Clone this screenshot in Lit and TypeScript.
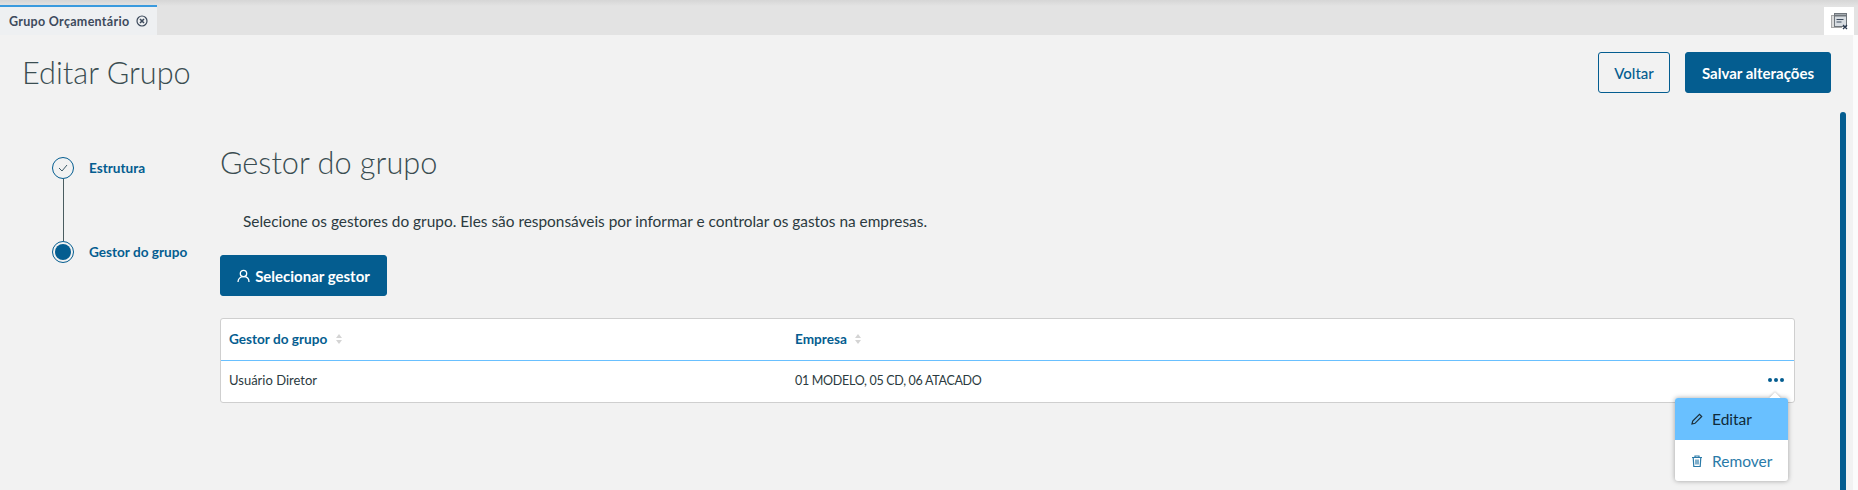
import { LitElement, html, css } from 'lit';
import { customElement } from 'lit/decorators.js';

const sortIcon = html`<svg class="sort" width="8" height="12" viewBox="0 0 8 12"><path d="M4 1 7 5H1Z" fill="#d4d4d4"/><path d="M4 11 1 7h6Z" fill="#d4d4d4"/></svg>`;

@customElement('app-root')
export class AppRoot extends LitElement {
    static styles = css`
        :host {
            display: block;
            position: relative;
            width: 1858px;
            height: 490px;
            overflow: hidden;
            background: #f2f2f2;
            font-family: "Lato", "Open Sans", sans-serif;
            color: #1c2f3a;
        }

        .tabbar {
            display: flex;
            justify-content: space-between;
            height: 35px;
            box-sizing: border-box;
            padding: 5px 4px 0 0;
            background: linear-gradient(#d6d6d6 0, #e3e3e3 6px, #e3e3e3 100%);
        }

        .tab {
            display: flex;
            align-items: center;
            gap: 7px;
            width: 157px;
            box-sizing: border-box;
            padding: 0 0 0 9px;
            border-top: 2px solid #3a9ade;
            background: #eef0f2;
            color: #3d4a5c;
            font-size: 12.5px;
            font-weight: 700;
            letter-spacing: 0.3px;
        }

        .corner {
            display: flex;
            align-items: center;
            justify-content: center;
            width: 30px;
            height: 28px;
            margin-top: 2px;
            background: #fff;
        }

        .page {
            padding: 0 27px 0 22px;
        }

        .top {
            display: flex;
            justify-content: space-between;
            align-items: flex-start;
            padding-top: 17px;
        }

        h1 {
            margin: 2px 0 0;
            color: #3a4d51;
            font-size: 30.7px;
            font-weight: 300;
            line-height: 38px;
        }

        .actions {
            display: flex;
            gap: 15px;
        }

        button {
            display: flex;
            align-items: center;
            justify-content: center;
            gap: 5px;
            height: 41px;
            box-sizing: border-box;
            border: 1px solid #045d90;
            border-radius: 3px;
            background: #045d90;
            color: #fff;
            font: 700 15px "Lato", sans-serif;
        }

        button.ghost {
            width: 72px;
            background: transparent;
            color: #045d90;
            font-weight: 500;
        }

        button.save {
            width: 146px;
        }

        button.pick {
            width: 167px;
        }

        .main {
            display: flex;
            margin-top: 52px;
        }

        .steps {
            width: 198px;
            flex: none;
            padding-top: 12px;
        }

        .step {
            display: flex;
            align-items: center;
            gap: 15px;
            height: 22px;
            padding-left: 30px;
            color: #045d90;
            font-size: 13.6px;
            font-weight: 700;
        }

        .step + .step {
            margin-top: 62px;
        }

        .bullet {
            flex: none;
            display: flex;
            align-items: center;
            justify-content: center;
            width: 22px;
            height: 22px;
            box-sizing: border-box;
            border: 1px solid #045d90;
            border-radius: 50%;
        }

        .dot {
            width: 16px;
            height: 16px;
            border-radius: 50%;
            background: #045d90;
        }

        .link {
            width: 1px;
            height: 62px;
            margin: 22px 0 -84px 41px;
            background: #4a5c60;
        }

        .content {
            flex: 1;
        }

        h2 {
            margin: 1px 0 0;
            color: #3a4d51;
            font-size: 30.7px;
            font-weight: 300;
            line-height: 34px;
        }

        .desc {
            margin: 31px 0 0 23px;
            font-size: 15.4px;
            line-height: 20px;
            color: #2b3a40;
        }

        .pick {
            margin-top: 24px;
        }

        .table {
            width: 1575px;
            margin-top: 22px;
            box-sizing: border-box;
            border: 1px solid #cfcfcf;
            border-radius: 3px;
            background: #fff;
        }

        .row {
            display: grid;
            grid-template-columns: 566px 1fr 26px;
            align-items: center;
            padding: 0 0 3px 8px;
            height: 41px;
            box-sizing: border-box;
            font-size: 13px;
            color: #2b3a40;
        }

        .row.head {
            height: 42px;
            padding-bottom: 2px;
            border-bottom: 1px solid #69c0ff;
            color: #045d90;
            font-size: 13.6px;
            font-weight: 700;
        }

        .caps {
            font-size: 12.5px;
            letter-spacing: -0.3px;
        }

        .sort {
            margin-left: 4px;
            vertical-align: -1px;
        }

        .more {
            display: flex;
            gap: 2px;
        }

        .more span {
            width: 4px;
            height: 4px;
            border-radius: 50%;
            background: #045d90;
        }

        .menu {
            position: absolute;
            left: 1675px;
            top: 398px;
            width: 113px;
            border-radius: 3px;
            background: #fff;
            box-shadow: 0 0 5px rgba(0, 0, 0, 0.35);
            font-size: 15.5px;
        }

        .menu::before {
            content: "";
            position: absolute;
            right: 9px;
            top: -4px;
            width: 8px;
            height: 8px;
            transform: rotate(45deg);
            background: #fff;
            box-shadow: -1px -1px 2px rgba(0, 0, 0, 0.15);
        }

        .item {
            position: relative;
            display: flex;
            align-items: center;
            gap: 9px;
            height: 41px;
            padding-left: 16px;
            color: #2a7aa8;
        }

        .item.active {
            height: 42px;
            background: #69c0ff;
            border-radius: 3px 3px 0 0;
            color: #0f2a3a;
        }

        .scroll {
            position: absolute;
            left: 1840px;
            top: 112px;
            bottom: 0;
            width: 6px;
            border-radius: 3px 3px 0 0;
            background: #045d90;
        }

        .edge {
            position: absolute;
            left: 1853px;
            top: 35px;
            bottom: 0;
            width: 5px;
            background: #fbfbfb;
        }
    `;

    render() {
        return html`
            <div class="tabbar">
                <div class="tab">
                    Grupo Orçamentário
                    <svg width="12" height="12" viewBox="0 0 12 12" fill="none" stroke="#3d4a5c">
                        <circle cx="6" cy="6" r="5" stroke-width="1.2"/>
                        <path d="M4 4l4 4M8 4l-4 4" stroke-width="1.6"/>
                    </svg>
                </div>
                <div class="corner">
                    <svg width="17" height="17" viewBox="0 0 17 17" fill="none">
                        <rect x="0.500" y="2.500" width="10" height="12" fill="#dcdcdc" stroke="#a8a8a8"/>
                        <rect x="3.500" y="0.500" width="12" height="13" fill="#d8dde2" stroke="#70767c"/>
                        <path d="M3.500 2.500h12" stroke="#70767c" stroke-width="2"/>
                        <path d="M5.500 6.500h7M5.500 9h5" stroke="#3d4a5c"/>
                        <path d="M12 12l4 4M16 12l-4 4" stroke="#2c3a50" stroke-width="1.3"/>
                    </svg>
                </div>
            </div>
            <div class="page">
                <div class="top">
                    <h1>Editar Grupo</h1>
                    <div class="actions">
                        <button class="ghost">Voltar</button>
                        <button class="save">Salvar alterações</button>
                    </div>
                </div>
                <div class="main">
                    <div class="steps">
                        <div class="link"></div>
                        <div class="step">
                            <span class="bullet">
                                <svg width="10" height="8" viewBox="0 0 10 8" fill="none" stroke="#3d5a68" stroke-width="1">
                                    <path d="M1 4l3 3 5-6"/>
                                </svg>
                            </span>
                            Estrutura
                        </div>
                        <div class="step">
                            <span class="bullet"><span class="dot"></span></span>
                            Gestor do grupo
                        </div>
                    </div>
                    <div class="content">
                        <h2>Gestor do grupo</h2>
                        <p class="desc">Selecione os gestores do grupo. Eles são responsáveis por informar e controlar os gastos na empresas.</p>
                        <button class="pick">
                            <svg width="13" height="14" viewBox="0 0 13 14" fill="none" stroke="#fff" stroke-width="1.3">
                                <circle cx="6.500" cy="4.500" r="3.200"/>
                                <path d="M1 13c0-3.200 2.200-5.300 5.500-5.300S12 9.800 12 13"/>
                            </svg>
                            Selecionar gestor
                        </button>
                        <div class="table">
                            <div class="row head">
                                <div>Gestor do grupo ${sortIcon}</div>
                                <div>Empresa ${sortIcon}</div>
                                <div></div>
                            </div>
                            <div class="row">
                                <div>Usuário Diretor</div>
                                <div class="caps">01 MODELO, 05 CD, 06 ATACADO</div>
                                <div class="more"><span></span><span></span><span></span></div>
                            </div>
                        </div>
                    </div>
                </div>
            </div>
            <div class="menu">
                <div class="item active">
                    <svg width="12" height="12" viewBox="0 0 12 12" fill="none" stroke="#1c2f3a" stroke-width="1.200">
                        <path d="M1 11l.7-3L8.500 1.300l2.200 2.200L4 10.300Z"/>
                    </svg>
                    Editar
                </div>
                <div class="item">
                    <svg width="12" height="12" viewBox="0 0 12 12" fill="none" stroke="#2a7aa8" stroke-width="1.200">
                        <path d="M1 2.500h10M4 2.500V1h4v1.500M2.200 2.500l.6 9h6.400l.6-9M5 4.500v5M7 4.500v5"/>
                    </svg>
                    Remover
                </div>
            </div>
            <div class="scroll"></div>
            <div class="edge"></div>
        `;
    }
}
